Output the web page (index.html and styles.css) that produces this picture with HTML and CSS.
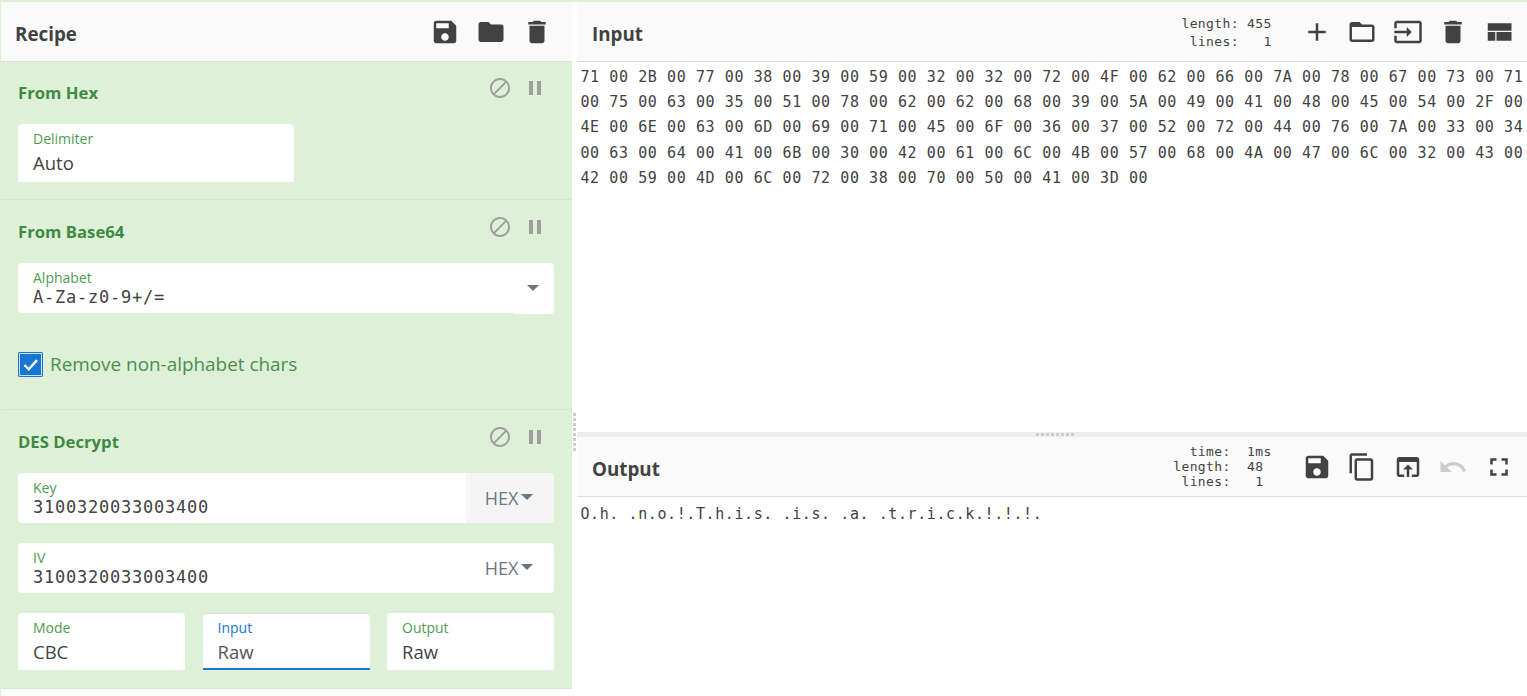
FILE: index.html
```html
<!DOCTYPE html>
<html lang="en">
<head>
<meta charset="utf-8">
<title>CyberChef</title>
<link rel="stylesheet" href="styles.css">
</head>
<body>
<svg class="defs" aria-hidden="true">
  <symbol id="i-save" viewBox="0 0 24 24"><path d="M17 3H5c-1.11 0-2 .9-2 2v14c0 1.1.89 2 2 2h14c1.1 0 2-.9 2-2V7l-4-4zm-5 16c-1.66 0-3-1.34-3-3s1.34-3 3-3 3 1.34 3 3-1.34 3-3 3zm3-10H5V5h10v4z"/></symbol>
  <symbol id="i-folder" viewBox="0 0 24 24"><path d="M10 4H4c-1.1 0-1.99.9-1.99 2L2 18c0 1.1.9 2 2 2h16c1.1 0 2-.9 2-2V8c0-1.1-.9-2-2-2h-8l-2-2z"/></symbol>
  <symbol id="i-delete" viewBox="0 0 24 24"><path d="M6 19c0 1.1.9 2 2 2h8c1.1 0 2-.9 2-2V7H6v12zM19 4h-3.5l-1-1h-5l-1 1H5v2h14V4z"/></symbol>
  <symbol id="i-add" viewBox="0 0 24 24"><path d="M19 13h-6v6h-2v-6H5v-2h6V5h2v6h6v2z"/></symbol>
  <symbol id="i-folder-open" viewBox="0 0 24 24"><path d="M20 6h-8l-2-2H4c-1.1 0-1.99.9-1.99 2L2 18c0 1.1.9 2 2 2h16c1.1 0 2-.9 2-2V8c0-1.1-.9-2-2-2zm0 12H4V8h16v10z"/></symbol>
  <symbol id="i-input" viewBox="0 0 24 24"><path d="M21 3.01H3c-1.1 0-2 .9-2 2V9h2V4.99h18v14.03H3V15H1v4.01c0 1.1.9 1.98 2 1.98h18c1.1 0 2-.88 2-1.98v-14c0-1.11-.9-2-2-2zM11 16l4-4-4-4v3H1v2h10v3z"/></symbol>
  <symbol id="i-compact" viewBox="0 0 24 24"><path d="M3 19h6v-7H3v7zm7 0h12v-7H10v7zM3 5v6h19V5H3z"/></symbol>
  <symbol id="i-copy" viewBox="0 0 24 24"><path d="M16 1H4c-1.1 0-2 .9-2 2v14h2V3h12V1zm3 4H8c-1.1 0-2 .9-2 2v14c0 1.1.9 2 2 2h11c1.1 0 2-.9 2-2V7c0-1.1-.9-2-2-2zm0 16H8V7h11v14z"/></symbol>
  <symbol id="i-open" viewBox="0 0 24 24"><path d="M19 4H5c-1.11 0-2 .9-2 2v12c0 1.1.89 2 2 2h4v-2H5V8h14v10h-4v2h4c1.1 0 2-.9 2-2V6c0-1.1-.89-2-2-2zm-7 6l-4 4h3v6h2v-6h3l-4-4z"/></symbol>
  <symbol id="i-undo" viewBox="0 0 24 24"><path d="M12.5 8c-2.65 0-5.05.99-6.9 2.6L2 7v9h9l-3.62-3.62c1.39-1.16 3.16-1.88 5.12-1.88 3.54 0 6.55 2.31 7.6 5.5l2.37-.78C21.08 11.03 17.15 8 12.5 8z"/></symbol>
  <symbol id="i-full" viewBox="0 0 24 24"><path d="M7 14H5v5h5v-2H7v-3zm-2-4h2V7h3V5H5v5zm12 7h-3v2h5v-5h-2v3zM14 5v2h3v3h2V5h-5z"/></symbol>
  <symbol id="i-block" viewBox="0 0 24 24"><path d="M12 2C6.48 2 2 6.48 2 12s4.48 10 10 10 10-4.48 10-10S17.52 2 12 2zM4 12c0-4.42 3.58-8 8-8 1.85 0 3.55.63 4.9 1.69L5.69 16.9C4.63 15.55 4 13.85 4 12zm8 8c-1.85 0-3.55-.63-4.9-1.69L18.31 7.1C19.37 8.45 20 10.15 20 12c0 4.42-3.58 8-8 8z"/></symbol>
  <symbol id="i-pause" viewBox="0 0 24 24"><path d="M6 19h4V5H6v14zm8-14v14h4V5h-4z"/></symbol>
</svg>
<div class="app">
  <section class="recipe">
    <header class="bar">
      <h1 class="bar-title">Recipe</h1>
      <div class="tools tools-recipe">
        <svg class="ic"><use href="#i-save"/></svg>
        <svg class="ic"><use href="#i-folder"/></svg>
        <svg class="ic"><use href="#i-delete"/></svg>
      </div>
    </header>
    <div class="op op-first">
      <div class="op-head">
        <h2 class="op-title">From Hex</h2>
        <div class="op-tools"><svg class="ic-op"><use href="#i-block"/></svg><svg class="ic-op"><use href="#i-pause"/></svg></div>
      </div>
      <div class="field field-tall field-half">
        <span class="label">Delimiter</span>
        <span class="value">Auto</span>
      </div>
    </div>
    <div class="op op-b64">
      <div class="op-head">
        <h2 class="op-title">From Base64</h2>
        <div class="op-tools"><svg class="ic-op"><use href="#i-block"/></svg><svg class="ic-op"><use href="#i-pause"/></svg></div>
      </div>
      <div class="field field-row">
        <div class="field-main">
          <span class="label label-mono">Alphabet</span>
          <span class="value-mono">A-Za-z0-9+/=</span>
        </div>
        <div class="drop"><span class="caret"></span></div>
      </div>
      <label class="check"><span class="box"><svg viewBox="0 0 24 24" class="tick"><path d="M5 12.5l5 5L19.5 7"/></svg></span><span class="check-text">Remove non-alphabet chars</span></label>
    </div>
    <div class="op op-des">
      <div class="op-head">
        <h2 class="op-title">DES Decrypt</h2>
        <div class="op-tools"><svg class="ic-op"><use href="#i-block"/></svg><svg class="ic-op"><use href="#i-pause"/></svg></div>
      </div>
      <div class="field field-row">
        <div class="field-main">
          <span class="label label-mono">Key</span>
          <span class="value-mono">3100320033003400</span>
        </div>
        <div class="hex hex-grey">HEX<span class="caret"></span></div>
      </div>
      <div class="field field-row">
        <div class="field-main">
          <span class="label label-mono">IV</span>
          <span class="value-mono">3100320033003400</span>
        </div>
        <div class="hex">HEX<span class="caret"></span></div>
      </div>
      <div class="triple">
        <div class="field field-tall"><span class="label">Mode</span><span class="value">CBC</span></div>
        <div class="field field-tall field-active"><span class="label label-active">Input</span><span class="value value-active">Raw</span></div>
        <div class="field field-tall"><span class="label">Output</span><span class="value">Raw</span></div>
      </div>
    </div>
  </section>
  <div class="vgutter"><span class="vdots"></span></div>
  <section class="io">
    <div class="pane pane-input">
      <header class="bar">
        <h1 class="bar-title bar-title-io">Input</h1>
        <pre class="stats stats-input">length: 455
 lines:   1</pre>
        <div class="tools">
          <svg class="ic"><use href="#i-add"/></svg>
          <svg class="ic"><use href="#i-folder-open"/></svg>
          <svg class="ic"><use href="#i-input"/></svg>
          <svg class="ic"><use href="#i-delete"/></svg>
          <svg class="ic"><use href="#i-compact"/></svg>
        </div>
      </header>
      <pre class="text">71 00 2B 00 77 00 38 00 39 00 59 00 32 00 32 00 72 00 4F 00 62 00 66 00 7A 00 78 00 67 00 73 00 71
00 75 00 63 00 35 00 51 00 78 00 62 00 62 00 68 00 39 00 5A 00 49 00 41 00 48 00 45 00 54 00 2F 00
4E 00 6E 00 63 00 6D 00 69 00 71 00 45 00 6F 00 36 00 37 00 52 00 72 00 44 00 76 00 7A 00 33 00 34
00 63 00 64 00 41 00 6B 00 30 00 42 00 61 00 6C 00 4B 00 57 00 68 00 4A 00 47 00 6C 00 32 00 43 00
42 00 59 00 4D 00 6C 00 72 00 38 00 70 00 50 00 41 00 3D 00</pre>
    </div>
    <div class="hgutter"><span class="hdots"></span></div>
    <div class="pane pane-output">
      <header class="bar">
        <h1 class="bar-title bar-title-io">Output</h1>
        <pre class="stats stats-output">  time:  1ms
length:  48
 lines:   1</pre>
        <div class="tools">
          <svg class="ic"><use href="#i-save"/></svg>
          <svg class="ic"><use href="#i-copy"/></svg>
          <svg class="ic"><use href="#i-open"/></svg>
          <svg class="ic ic-off"><use href="#i-undo"/></svg>
          <svg class="ic"><use href="#i-full"/></svg>
        </div>
      </header>
      <pre class="text text-output">O.h. .n.o.!.T.h.i.s. .i.s. .a. .t.r.i.c.k.!.!.!.</pre>
    </div>
  </section>
</div>
</body>
</html>
```
FILE: styles.css
```css
* { box-sizing: border-box; }
html, body { margin: 0; height: 100%; overflow: hidden; background: #fff; }
body { font-family: "Open Sans", "Noto Sans", sans-serif; color: #424242; }
.defs { width: 0; height: 0; display: block; }

.app {
  display: grid;
  grid-template-columns: 572px 5px 1fr;
  height: 696px;
  border-top: 2px solid #dff0d8;
}

.recipe { border-left: 1px solid #dff0d8; display: flex; flex-direction: column; min-width: 0; }

.bar {
  height: 60px;
  background: #fafafa;
  border-bottom: 1px solid #ddd;
  display: flex;
  align-items: center;
  flex: none;
}
.bar-title {
  margin: 0 0 0 14px;
  font-size: 18.8px;
  font-weight: 700;
  color: #424242;
  line-height: 24px;
  position: relative;
  top: 2px;
}
.bar-title-io { margin-left: 15px; }

.tools { margin-left: auto; display: flex; gap: 15.6px; padding-right: 13px; }
.tools-recipe { padding-right: 20px; gap: 16px; }
.ic { width: 30px; height: 30px; fill: #424242; display: block; }
.ic-off { fill: #ccc; }

.stats {
  margin: 0 0 0 auto;
  font: 13px/18px "DejaVu Sans Mono", monospace;
  letter-spacing: .37px;
  color: #424242;
  position: relative;
  margin-right: 30px;
}
.stats-output { line-height: 15px; }
.stats-input { top: 1px; }
.stats + .tools { margin-left: 0; }

.op { background: #dff0d8; border-bottom: 1px solid #d2e6c9; padding: 0 18px 0 17px; flex: none; }
.op-head { height: 63px; padding-top: 18px; display: flex; justify-content: space-between; align-items: flex-start; }
.op-first .op-head { height: 62px; padding-top: 17px; }
.op-title { margin: 0; font-size: 16.7px; font-weight: 700; line-height: 28px; color: #3f8a43; }
.op-tools { display: flex; gap: 11px; margin-right: 7px; margin-top: -3px; }
.ic-op { width: 24px; height: 24px; fill: #9e9e9e; display: block; }

.op-first { height: 138px; }
.op-b64 { height: 210px; }
.op-des { height: 279px; }

.field { background: #fff; border-radius: 4px 4px 0 0; display: flex; flex-direction: column; }
.field-tall { height: 57px; padding: 5px 15px 0; }
.field-half { width: 276px; height: 58px; }
.field-row { height: 50px; flex-direction: row; border-radius: 4px 4px 4px 4px; margin-bottom: 20px; }
.field-main { flex: 1; padding: 5px 15px 0; min-width: 0; }
.label { font-size: 14px; line-height: 20px; color: #4e9c52; display: block; }
.label-mono { line-height: 19px; }
.label-active { color: #1976d2; }
.value { font-size: 18.5px; line-height: 28px; color: #444; margin-top: 0; display: block; }
.value-active { color: #555; }
.value-mono {
  font: 17px/20px "DejaVu Sans Mono", monospace;
  letter-spacing: .76px;
  color: #424242;
  display: block;
}

.drop { width: 40px; height: 51px; background: #fff; border-radius: 0 4px 4px 0; display: flex; align-items: center; justify-content: center; padding: 0 2px 2px 0; }
.caret { display: inline-block; width: 0; height: 0; border-left: 6px solid transparent; border-right: 6px solid transparent; border-top: 6px solid #6c757d; }
.hex {
  width: 88px;
  font-size: 18px;
  color: #6c757d;
  display: flex;
  align-items: center;
  justify-content: center;
  gap: 3px;
  padding: 0 2px 1px 0;
  border-radius: 0 4px 4px 0;
}
.hex .caret { position: relative; top: -1px; }
.hex-grey { background: #f5f5f5; }

.check { display: flex; align-items: center; gap: 7px; margin-top: 38px; }
.op-b64 .field-row { margin-bottom: 0; }
.box { width: 25px; height: 25px; background: #1976d2; border-radius: 2px; display: flex; align-items: center; justify-content: center; box-shadow: inset 0 0 0 1px #1976d2, inset 0 0 0 2px #cfe2f5; }
.tick { width: 21px; height: 21px; fill: none; stroke: #fff; stroke-width: 2.6; }
.check-text { font-size: 18.9px; line-height: 27px; color: #4b8f4f; }

.triple { display: flex; gap: 17.5px; }
.triple .field { flex: 1; min-width: 0; }
.field-active { border-bottom: 2px solid #1976d2; border-top: 1px solid #ddd; }
.field-active .label { margin-top: -1px; }

.vgutter { display: flex; align-items: flex-start; justify-content: center; background: #fff; }
.vdots {
  width: 3px;
  height: 39px;
  margin-top: 411px;
  margin-right: 1px;
  background: repeating-linear-gradient(to bottom, #ccc 0 3px, transparent 3px 5px);
}

.io { display: flex; flex-direction: column; min-width: 0; }
.pane { display: flex; flex-direction: column; min-height: 0; }
.pane-input { height: 430px; flex: none; }
.pane-output { flex: 1; }
.hgutter { height: 5px; flex: none; background: #eee; display: flex; justify-content: center; align-items: center; padding-left: 7px; }
.hdots {
  width: 39px;
  height: 3px;
  background: repeating-linear-gradient(to right, #ccc 0 3px, transparent 3px 5px);
}

.text {
  margin: 0;
  padding: 3px 0 0 3.5px;
  font: 15px/25.2px "DejaVu Sans Mono", monospace;
  letter-spacing: .59px;
  color: #424242;
  overflow: hidden;
}
.text-output { padding-top: 5px; }
```
